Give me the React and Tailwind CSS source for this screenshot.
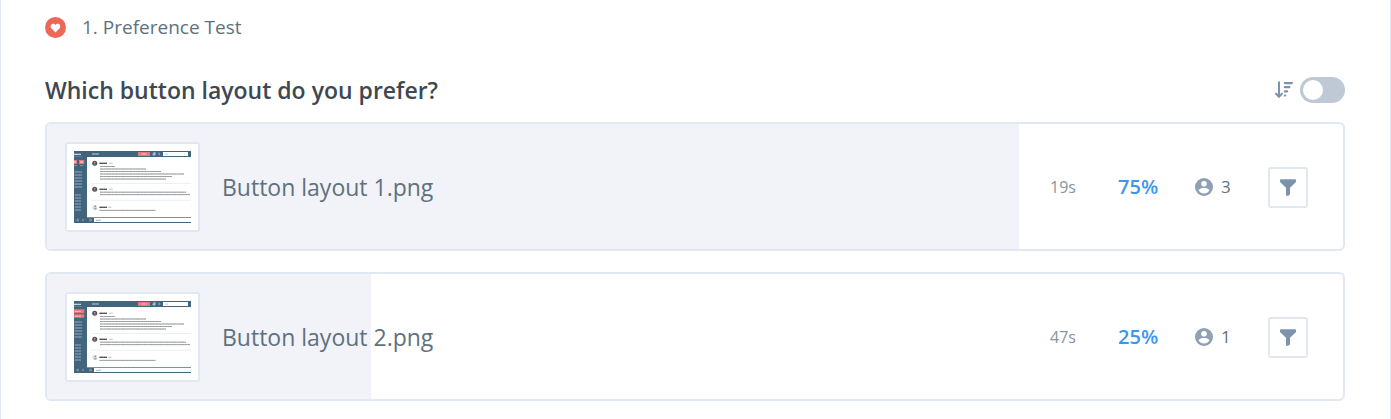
import { useState } from "react";

const results = [
  { name: "Button layout 1.png", time: "19s", percent: 75, count: 3, variant: "icons" },
  { name: "Button layout 2.png", time: "47s", percent: 25, count: 1, variant: "stacked" },
];

const sidebarRows = [21, 24, 27, 30, 33, 36, 44, 47, 50, 53, 56, 59];
const firstPost = [
  [15.5, 15],
  [18, 46],
  [20.5, 61],
  [23, 84],
  [25.5, 72],
  [28, 66],
];
const secondPost = [
  [41.2, 86],
  [43.6, 90],
];

function TextLine({ x, y, width, color = "#8d9093", thickness = 1 }) {
  return (
    <g stroke={color} strokeWidth={thickness}>
      <path d={`M${x} ${y}h${width}`} opacity=".65" />
      <path d={`M${x} ${y}h${width}`} opacity=".6" strokeDasharray="3.4 .5 1.8 .4 5 .5 2.6 .4" />
    </g>
  );
}

function Thumbnail({ variant, label }) {
  return (
    <svg width="117" height="72" viewBox="0 0 117 72" role="img" aria-label={label} className="block">
      <rect width="117" height="72" fill="#fff" />
      <rect width="117" height="6" fill="#42647c" />
      <rect width="13" height="72" fill="#42647c" />
      <rect y="66.3" width="117" height="5.7" fill="#42647c" />
      <rect x="20" y="67" width="97" height="4" fill="#fff" />
      <TextLine x={22} y={69.3} width={5} color="#a9b0b6" />
      <TextLine x={0} y={3.4} width={7} color="#dfe7ed" thickness={1.3} />
      <TextLine x={0} y={5.6} width={8} color="#7793a5" thickness={0.6} />
      <TextLine x={18} y={3} width={7} color="#a8bac6" thickness={1.3} />
      <rect x="64" y="1" width="12" height="4" rx=".4" fill="#e97779" />
      <TextLine x={67.5} y={3} width={5} color="#f8cccc" thickness={0.9} />
      <path d="M79.3 2h1.7v2h-2V2.5M80.4 1.7h1" fill="none" stroke="#e1e9ef" strokeWidth=".8" />
      <rect x="84.3" y="1.6" width="1.8" height="2.6" fill="#7d98a9" />
      <rect x="89" y="1" width="25" height="4" rx=".3" fill="#fff" />
      <TextLine x={91} y={3.2} width={3} color="#bcc6ce" thickness={0.8} />
      {variant === "icons" ? (
        <g>
          <path d="M0 9h3v4H0zM5 9h5.3v4H5z" fill="#e97779" />
          <path d="M0 10.3h2v1.4H0zM6.4 10h2.2v1.9H6.4z" fill="#f7c1c1" />
          <TextLine x={0} y={14.6} width={3} color="#91a8b7" thickness={0.8} />
          <TextLine x={6} y={14.6} width={3.4} color="#91a8b7" thickness={0.8} />
        </g>
      ) : (
        <g>
          <path d="M0 8.3h10.3v4H0zM0 13.2h10.3v3.6H0z" fill="#e97779" />
          <TextLine x={1} y={10.4} width={6} color="#f8cccc" thickness={0.9} />
          <TextLine x={1} y={15.2} width={6} color="#f8cccc" thickness={0.9} />
        </g>
      )}
      {sidebarRows.map((y) => (
        <TextLine key={y} x={y < 40 ? 0.5 : 1} y={y} width={y < 40 ? 7.5 : 6} color="#94aaba" thickness={1.1} />
      ))}
      <circle cx="3.7" cy="69" r="1.3" fill="#7893a5" />
      <circle cx="9" cy="69" r="1.1" fill="#7893a5" />
      <circle cx="16.5" cy="69" r="1.5" fill="#7893a5" />
      <circle cx="20.7" cy="12.3" r="2.5" fill="#5b4a4c" />
      <path d="M19 14a2 1.8 0 0 1 3.6 0z" fill="#4b6cae" />
      <circle cx="20.7" cy="11.8" r="1" fill="#c48f7b" />
      <circle cx="20.7" cy="38.3" r="2.5" fill="#5b4a4c" />
      <path d="M19 40a2 1.8 0 0 1 3.6 0z" fill="#4b6cae" />
      <circle cx="20.7" cy="37.8" r="1" fill="#c48f7b" />
      <circle cx="20.7" cy="56.3" r="2.5" fill="#dce3df" />
      <path d="M20 57.2h2.6v1.3H20z" fill="#72ac83" />
      <circle cx="21.3" cy="55.4" r=".8" fill="#b18275" />
      <TextLine x={25.5} y={12.3} width={7.5} color="#303236" thickness={1.3} />
      <TextLine x={35} y={12.3} width={4} color="#b6babd" thickness={0.8} />
      <TextLine x={25.5} y={38.3} width={7.5} color="#303236" thickness={1.3} />
      <TextLine x={35} y={38.3} width={4} color="#b6babd" thickness={0.8} />
      <TextLine x={25.5} y={56.3} width={7.5} color="#303236" thickness={1.3} />
      <TextLine x={34} y={56.3} width={3.5} color="#b6babd" thickness={0.8} />
      {firstPost.map(([y, width]) => (
        <TextLine key={y} x={26} y={y} width={width} />
      ))}
      {secondPost.map(([y, width]) => (
        <TextLine key={y} x={26} y={y} width={width} />
      ))}
      <TextLine x={25.5} y={59.4} width={56} />
      <path d="M17 32.5h100M17 49.3h100" stroke="#e9ebed" strokeWidth=".8" />
    </svg>
  );
}

function HeartBadge() {
  return (
    <svg width="21" height="21" viewBox="0 0 21 21" aria-hidden="true">
      <circle cx="10.5" cy="10.5" r="10.5" fill="#ee6757" />
      <path
        d="M10.5 15.5 6.6 11.5C4.2 9 6.8 5.5 9.5 7l1 .9 1-.9c2.7-1.5 5.3 2 2.9 4.5z"
        fill="#fff"
      />
    </svg>
  );
}

function SortIcon() {
  return (
    <svg width="18" height="18" viewBox="0 0 18 18" fill="none" stroke="#7d93ab" strokeLinecap="round" aria-hidden="true">
      <path d="M4 1.2v14.4M1.1 12.8 4 15.9l2.9-3.1" strokeWidth="2" strokeLinejoin="round" />
      <path d="M9.8 2.1h7.1M9.8 6.2h4.5M9.8 10.4h2.3M9.8 14.5h.4" strokeWidth="2.2" />
    </svg>
  );
}

function PersonIcon() {
  return (
    <svg width="18" height="18" viewBox="0 0 18 18" aria-hidden="true">
      <circle cx="9" cy="9" r="9" fill="#8fa0b4" />
      <circle cx="9" cy="5.8" r="2.8" fill="#fff" />
      <path d="M3.5 12.2c.8-1.6 3.1-2.2 5.5-2.2s4.7.6 5.5 2.2c-1.1 2-3.1 3.3-5.5 3.3s-4.4-1.3-5.5-3.3z" fill="#fff" />
    </svg>
  );
}

function FunnelIcon() {
  return (
    <svg width="16" height="17" viewBox="0 0 16 17" aria-hidden="true">
      <path
        d="M1 .3h14q1 0 1 1v1.2q0 .6-.5 1.1L10 8.7v6.2q0 .5-.4.8l-1.1.8q-.4.3-.9.3H6.6q-.6 0-.6-.6V8.7L.5 3.6Q0 3.1 0 2.5V1.3q0-1 1-1z"
        fill="#7d93ab"
      />
    </svg>
  );
}

function ResultCard({ result }) {
  return (
    <li className="relative overflow-hidden rounded-md border-2 border-[#e1e8f1] bg-white">
      <div className="absolute inset-y-0 left-0 bg-[#f1f3f8]" style={{ width: `${result.percent}%` }} />
      <div className="relative flex items-center pt-[18px] pr-[35px] pb-[17px] pl-[18px]">
        <div className="shrink-0 rounded-[3px] border-2 border-[#e1e8f1] bg-white p-[7px]">
          <Thumbnail variant={result.variant} label={result.name} />
        </div>
        <p className="ml-[22px] min-w-0 flex-1 truncate text-[23px] leading-8 text-[#5f717e]">{result.name}</p>
        <span className="w-[68px] shrink-0 text-base leading-6 text-[#8795a1]">{result.time}</span>
        <span className="w-[77px] shrink-0 text-xl leading-6 font-semibold text-[#3b97ee]">{result.percent}%</span>
        <span className="flex w-[73px] shrink-0 items-center gap-2 text-[17px] leading-6 text-[#5f717e]">
          <PersonIcon />
          {result.count}
        </span>
        <button
          type="button"
          aria-label={`Filter by ${result.name}`}
          className="flex h-[41px] w-10 shrink-0 items-center justify-center rounded-[3px] border-2 border-[#e1e8f1] bg-white"
        >
          <FunnelIcon />
        </button>
      </div>
    </li>
  );
}

export default function App() {
  const [sorted, setSorted] = useState(false);
  const shown = sorted ? [...results].sort((a, b) => b.percent - a.percent) : results;

  return (
    <main className="min-h-screen border-x border-[#e1e8f1] bg-white pt-3 pr-[45px] pb-[18px] pl-11 font-['Open_Sans','Noto_Sans',sans-serif]">
      <div className="flex items-center gap-4">
        <HeartBadge />
        <p className="text-[19px] leading-[30px] text-[#5f717e]">1. Preference Test</p>
      </div>
      <header className="mt-8 flex items-center justify-between">
        <h1 className="text-[23px] leading-8 font-semibold text-[#3d4852]">Which button layout do you prefer?</h1>
        <label className="flex cursor-pointer items-center gap-[7px]">
          <SortIcon />
          <input
            type="checkbox"
            role="switch"
            aria-label="Sort by preference"
            checked={sorted}
            onChange={(event) => setSorted(event.target.checked)}
            className="flex h-[26px] w-[45px] cursor-pointer appearance-none items-center rounded-full bg-[#bfc9d6] px-[3px] before:size-5 before:rounded-full before:bg-white before:content-[''] checked:justify-end checked:bg-[#3b97ee]"
          />
        </label>
      </header>
      <ul className="mt-4 flex flex-col gap-[21px]">
        {shown.map((result) => (
          <ResultCard key={result.name} result={result} />
        ))}
      </ul>
    </main>
  );
}
